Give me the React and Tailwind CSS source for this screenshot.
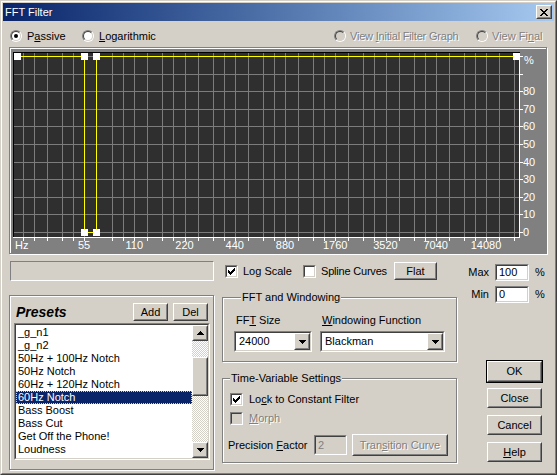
import React from "react";

const FACE = "bg-[#d4d0c8]";
const raised = "border border-t-white border-l-white border-r-[#404040] border-b-[#404040]";
const raisedIn = "border border-t-[#d4d0c8] border-l-[#d4d0c8] border-r-[#808080] border-b-[#808080]";
const sunkenOut = "border border-t-[#808080] border-l-[#808080] border-r-white border-b-white";
const sunkenIn = "border border-t-[#404040] border-l-[#404040] border-r-[#d4d0c8] border-b-[#d4d0c8]";
const etched = "border border-[#808080] shadow-[inset_1px_1px_0_#fff,1px_1px_0_#fff]";
const disText = "text-[#808080] [text-shadow:1px_1px_0_#fff]";

const PRESETS = [
  "_g_n1",
  "_g_n2",
  "50Hz + 100Hz Notch",
  "50Hz Notch",
  "60Hz + 120Hz Notch",
  "60Hz Notch",
  "Bass Boost",
  "Bass Cut",
  "Get Off the Phone!",
  "Loudness",
  "Low Pass at 1000Hz",
];

const U = ({ children }) => <span className="underline underline-offset-[1px]">{children}</span>;

const Pixels = ({ rects, w, h, color = "#000" }) => (
  <svg width={w} height={h} viewBox={`0 0 ${w} ${h}`} shapeRendering="crispEdges">
    {rects.map(([x, y, rw], i) => (
      <rect key={i} x={x} y={y} width={rw} height="1" fill={color} />
    ))}
  </svg>
);

const DOWN = [[0, 0, 7], [1, 1, 5], [2, 2, 3], [3, 3, 1]];
const UP = [[3, 0, 1], [2, 1, 3], [1, 2, 5], [0, 3, 7]];
const TICK = [[6, 0, 1], [5, 1, 2], [0, 2, 1], [4, 2, 3], [0, 3, 2], [3, 3, 3], [0, 4, 5], [1, 5, 3], [2, 6, 1]];
const CROSS = [[0, 0, 2], [6, 0, 2], [1, 1, 2], [5, 1, 2], [2, 2, 4], [3, 3, 2], [2, 4, 4], [1, 5, 2], [5, 5, 2], [0, 6, 2], [6, 6, 2]];

function Button({ children, className = "", disabled }) {
  return (
    <div className={`${raised} ${FACE} flex ${className}`}>
      <div className={`${raisedIn} flex-1 flex items-center justify-center whitespace-nowrap ${disabled ? disText : ""}`}>
        {children}
      </div>
    </div>
  );
}

function Check({ checked, disabled }) {
  return (
    <span className={`inline-flex w-[13px] h-[13px] shrink-0 ${sunkenOut}`}>
      <span className={`flex-1 flex items-center justify-center ${sunkenIn} ${disabled ? "bg-[#d4d0c8]" : "bg-white"}`}>
        {checked && <Pixels rects={TICK} w={7} h={7} />}
      </span>
    </span>
  );
}

function Radio({ checked, disabled }) {
  return (
    <span className="inline-flex w-[12px] h-[12px] shrink-0 rounded-full border border-t-[#808080] border-l-[#808080] border-r-white border-b-white">
      <span
        className={`flex-1 rounded-full flex items-center justify-center border border-t-[#404040] border-l-[#404040] border-r-[#d4d0c8] border-b-[#d4d0c8] ${
          disabled ? "bg-[#d4d0c8]" : "bg-white"
        }`}
      >
        {checked && <span className="w-[4px] h-[4px] rounded-full bg-black" />}
      </span>
    </span>
  );
}

function Field({ value, className = "", disabled }) {
  return (
    <div className={`${sunkenOut} flex ${className}`}>
      <div className={`${sunkenIn} flex-1 flex items-center pl-[2px] ${disabled ? "bg-[#d4d0c8] text-[#808080]" : "bg-white"}`}>
        {value}
      </div>
    </div>
  );
}

function Combo({ value, className = "" }) {
  return (
    <div className={`${sunkenOut} flex ${className}`}>
      <div className={`${sunkenIn} flex-1 flex bg-white`}>
        <span className="flex-1 flex items-center pl-[3px]">{value}</span>
        <div className={`${raised} ${FACE} w-[16px] flex`}>
          <div className={`${raisedIn} flex-1 flex items-center justify-center`}>
            <Pixels rects={DOWN} w={7} h={4} />
          </div>
        </div>
      </div>
    </div>
  );
}

function Graph() {
  const vx = [];
  for (let k = -2; k <= 8; k++) {
    [0, 13, 28, 39].forEach((o) => {
      const x = Math.round(84 + 50.25 * k + o);
      if (x > 14 && x < 518 && Math.abs(x - 96) > 2) vx.push(x);
    });
  }
  const hy = Array.from({ length: 11 }, (_, i) => Math.round(56 + 17.6 * i));
  const freqs = ["55", "110", "220", "440", "880", "1760", "3520", "7040", "14080"];
  const pcts = ["80", "70", "60", "50", "40", "30", "20", "10", "0"];
  const pts = [[17, 56], [84, 56], [84, 232], [96, 232], [96, 56], [516, 56]];
  const font = { fontFamily: "'Liberation Sans', Arial, sans-serif", fontSize: 11 };

  return (
    <svg width="536" height="205" viewBox="10 48 536 205" className="block">
      <rect x="13" y="52" width="507" height="185" fill="#2f2f2f" />
      <g shapeRendering="crispEdges">
        <line x1="13" y1="52.5" x2="520" y2="52.5" stroke="#000" />
        <line x1="13.5" y1="52" x2="13.5" y2="237" stroke="#000" />
        {hy.map((y) => (
          <line key={`h${y}`} x1="14" x2="519" y1={y + 0.5} y2={y + 0.5} stroke="#7c7c7c" />
        ))}
        {vx.map((x) => (
          <line key={`v${x}`} x1={x + 0.5} x2={x + 0.5} y1="53" y2="237" stroke="#7c7c7c" />
        ))}
        <line x1="13" x2="520" y1="237.5" y2="237.5" stroke="#fff" />
        <line x1="519.5" x2="519.5" y1="53" y2="238" stroke="#fff" />
        {vx.map((x) => (
          <line key={`t${x}`} x1={x + 0.5} x2={x + 0.5} y1="238" y2="241" stroke="#fff" />
        ))}
        {hy.map((y) => (
          <line key={`r${y}`} x1="520" x2="523" y1={y + 0.5} y2={y + 0.5} stroke="#fff" />
        ))}
        <polyline
          points={pts.map(([x, y]) => `${x + 0.5},${y + 0.5}`).join(" ")}
          fill="none"
          stroke="#ffff00"
        />
        {pts.map(([x, y], i) => (
          <rect key={`p${i}`} x={x - 3} y={y - 3} width="7" height="7" fill="#fff" />
        ))}
      </g>
      <text x="15" y="249" fill="#fff" style={font}>
        Hz
      </text>
      {freqs.map((f, i) => (
        <text key={f} x={84 + 50.25 * i} y="249" fill="#fff" textAnchor="middle" style={font}>
          {f}
        </text>
      ))}
      <text x="524" y="64" fill="#fff" style={font}>
        %
      </text>
      {pcts.map((p, i) => (
        <text key={p} x="523" y={hy[i + 2] + 4} fill="#fff" style={font}>
          {p}
        </text>
      ))}
    </svg>
  );
}

function PresetList() {
  return (
    <div className={`${sunkenOut} flex ml-[4px] mt-[2px] w-[196px] h-[137px]`}>
      <div className={`${sunkenIn} flex-1 flex bg-white min-w-0`}>
        <div className="flex-1 overflow-hidden pt-[1px]">
          {PRESETS.map((p) => (
            <div
              key={p}
              className={`h-[13px] leading-[13px] pl-[2px] whitespace-nowrap ${
                p === "60Hz Notch" ? "bg-[#0a246a] text-white outline-1 outline-dotted outline-[#d4d0c8] -outline-offset-1" : ""
              }`}
            >
              {p}
            </div>
          ))}
        </div>
        <div className="w-[16px] flex flex-col">
          <Button className="h-[16px]">
            <Pixels rects={UP} w={7} h={4} />
          </Button>
          <div className="h-[16px] bg-[image:repeating-conic-gradient(#fff_0_25%,#d4d0c8_0_50%)] bg-[length:2px_2px]" />
          <Button className="h-[39px]" />
          <div className="flex-1 bg-[image:repeating-conic-gradient(#fff_0_25%,#d4d0c8_0_50%)] bg-[length:2px_2px]" />
          <Button className="h-[16px]">
            <Pixels rects={DOWN} w={7} h={4} />
          </Button>
        </div>
      </div>
    </div>
  );
}

export default function App() {
  return (
    <div className="w-[557px] h-[475px] bg-[#d4d0c8] border border-t-[#d4d0c8] border-l-[#d4d0c8] border-r-[#404040] border-b-[#404040] font-['Liberation_Sans',Arial,sans-serif] text-[11px] leading-[13px] text-black whitespace-nowrap">
      <div className="w-full h-full border border-t-white border-l-white border-r-[#808080] border-b-[#808080] p-[1px]">
        {/* title bar */}
        <div className="h-[18px] bg-gradient-to-r from-[#0a246a] to-[#a6caf0] flex items-center pl-[2px] pr-[2px]">
          <span className="text-white flex-1">FFT Filter</span>
          <Button className="w-[16px] h-[14px]">
            <Pixels rects={CROSS} w={8} h={7} />
          </Button>
        </div>

        {/* view mode radios */}
        <div className="mt-[8px] h-[14px] flex items-center pl-[7px]">
          <div className="w-[72px] flex items-center gap-[5px]">
            <Radio checked />
            <span>
              P<U>a</U>ssive
            </span>
          </div>
          <div className="w-[252px] flex items-center gap-[5px]">
            <Radio />
            <span>
              <U>L</U>ogarithmic
            </span>
          </div>
          <div className="w-[142px] flex items-center gap-[4px]">
            <Radio disabled />
            <span className={`${disText} tracking-[-0.2px]`}>
              View <U>I</U>nitial Filter Graph
            </span>
          </div>
          <div className="flex items-center gap-[4px]">
            <Radio disabled />
            <span className={disText}>
              View Fi<U>n</U>al
            </span>
          </div>
        </div>

        {/* graph */}
        <div className={`mt-[4px] ml-[6px] w-[538px] h-[207px] bg-[#808080] ${etched}`}>
          <Graph />
        </div>

        {/* lower area */}
        <div className="flex items-start">
          {/* left column */}
          <div className="ml-[6px] w-[205px]">
            <div className={`mt-[7px] ml-[1px] w-[204px] h-[20px] ${sunkenOut}`} />
            <div className={`mt-[14px] h-[175px] ${etched}`}>
              <div className="pt-[7px] pl-[6px] pr-[5px] flex items-center">
                <span className="flex-1 font-bold italic text-[14px]">Presets</span>
                <Button className="w-[35px] h-[18px]">Add</Button>
                <Button className="w-[35px] h-[18px] ml-[5px]">Del</Button>
              </div>
              <PresetList />
            </div>
          </div>

          {/* middle column */}
          <div className="ml-[8px] w-[235px]">
            <div className="mt-[7px] h-[20px] flex items-center">
              <div className="ml-[3px] w-[78px] shrink-0 flex items-center gap-[5px]">
                <Check checked />
                <span>Log Scale</span>
              </div>
              <div className="w-[91px] shrink-0 flex items-center gap-[5px]">
                <Check />
                <span className="tracking-[-0.2px]">Spline Curves</span>
              </div>
              <Button className="w-[43px] h-[18px] shrink-0">Flat</Button>
            </div>

            <fieldset className={`mt-[10px] w-[235px] pb-[9px] pl-[11px] ${etched}`}>
              <legend className="ml-[7px] px-[1px] leading-[13px] bg-[#d4d0c8]">FFT and Windowing</legend>
              <div className="flex gap-[8px] mt-[10px]">
                <div className="w-[78px]">
                  <div className="ml-[2px] h-[13px]">
                    FF<U>T</U> Size
                  </div>
                  <Combo value="24000" className="mt-[4px] h-[21px]" />
                </div>
                <div className="w-[125px]">
                  <div className="ml-[2px] h-[13px]">
                    <U>W</U>indowing Function
                  </div>
                  <Combo value="Blackman" className="mt-[4px] h-[21px]" />
                </div>
              </div>
            </fieldset>

            <fieldset className={`mt-[10px] w-[235px] pb-[6px] ${etched}`}>
              <legend className="ml-[7px] px-[1px] leading-[13px] bg-[#d4d0c8]">Time-Variable Settings</legend>
              <div className="mt-[8px] ml-[7px] h-[13px] flex items-center gap-[6px]">
                <Check checked />
                <span>
                  Lo<U>c</U>k to Constant Filter
                </span>
              </div>
              <div className="mt-[6px] ml-[7px] h-[13px] flex items-center gap-[6px]">
                <Check disabled />
                <span className={disText}>
                  <U>M</U>orph
                </span>
              </div>
              <div className="mt-[9px] ml-[5px] h-[22px] flex items-center">
                <span className="w-[86px]">
                  Precision <U>F</U>actor
                </span>
                <Field value="2" disabled className="w-[33px] h-[20px]" />
                <Button disabled className="ml-[5px] w-[96px] h-[22px]">
                  <span>
                    Tran<U>s</U>ition Curve
                  </span>
                </Button>
              </div>
            </fieldset>
          </div>

          {/* right column */}
          <div className="ml-[9px] w-[80px]">
            <div className="mt-[10px] h-[17px] flex items-center">
              <span className="w-[23px] text-right">Max</span>
              <Field value="100" className="ml-[6px] w-[34px] h-[17px]" />
              <span className="ml-[6px]">%</span>
            </div>
            <div className="mt-[5px] h-[17px] flex items-center">
              <span className="w-[23px] text-right">Min</span>
              <Field value="0" className="ml-[6px] w-[34px] h-[17px]" />
              <span className="ml-[6px]">%</span>
            </div>
            <div className="mt-[57px] ml-[20px] w-[57px] h-[23px] border border-black flex">
              <Button className="flex-1">OK</Button>
            </div>
            <Button className="mt-[5px] ml-[21px] w-[55px] h-[20px]">Close</Button>
            <Button className="mt-[7px] ml-[21px] w-[55px] h-[20px]">Cancel</Button>
            <Button className="mt-[7px] ml-[21px] w-[55px] h-[20px]">
              <span>
                <U>H</U>elp
              </span>
            </Button>
          </div>
        </div>
      </div>
    </div>
  );
}
